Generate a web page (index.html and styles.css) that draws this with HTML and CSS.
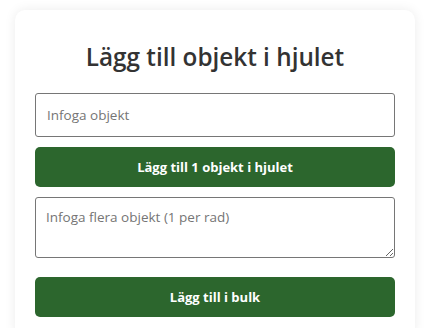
FILE: index.html
```html
<!DOCTYPE html>
<html lang="sv">
<head>
<meta charset="utf-8">
<title>Lägg till objekt i hjulet</title>
<link rel="stylesheet" href="styles.css">
</head>
<body>
<div class="card">
  <h2 class="title">Lägg till objekt i hjulet</h2>
  <input class="field" type="text" placeholder="Infoga objekt">
  <button class="btn">Lägg till 1 objekt i hjulet</button>
  <textarea class="area" placeholder="Infoga flera objekt (1 per rad)"></textarea>
  <button class="btn btn-bulk">Lägg till i bulk</button>
</div>
</body>
</html>
```
FILE: styles.css
```css
html, body {
  margin: 0;
  background: #ffffff;
  font-family: "Open Sans", "DejaVu Sans", sans-serif;
}
.card {
  box-sizing: border-box;
  width: 400px;
  margin: 10px 0 0 15px;
  padding: 1px 20px 20px;
  background: #fff;
  border-radius: 10px;
  box-shadow: 0 0 12px rgba(0, 0, 0, 0.08);
  display: flex;
  flex-direction: column;
}
.title {
  margin: 29px 0 0;
  height: 53px;
  font-size: 24.3px;
  font-weight: 600;
  line-height: 34px;
  color: #333;
  text-align: center;
}
.field {
  box-sizing: border-box;
  height: 44px;
  padding: 0 11px 1px;
  border: 1px solid #767676;
  border-radius: 3px;
  font: 13.5px "Open Sans", "DejaVu Sans", sans-serif;
  color: #333;
}
.field::placeholder, .area::placeholder {
  color: #757575;
}
.btn {
  box-sizing: border-box;
  height: 40px;
  margin-top: 10px;
  border: 0;
  border-radius: 5px;
  background: #2c662d;
  color: #fff;
  font: 700 13px "Open Sans", "DejaVu Sans", sans-serif;
}
.area {
  box-sizing: border-box;
  height: 61px;
  margin-top: 10px;
  padding: 10px 10px;
  border: 1px solid #767676;
  border-radius: 3px;
  font: 13.5px "Open Sans", "DejaVu Sans", sans-serif;
  color: #333;
}
.btn-bulk {
  margin-top: 19px;
}
```
